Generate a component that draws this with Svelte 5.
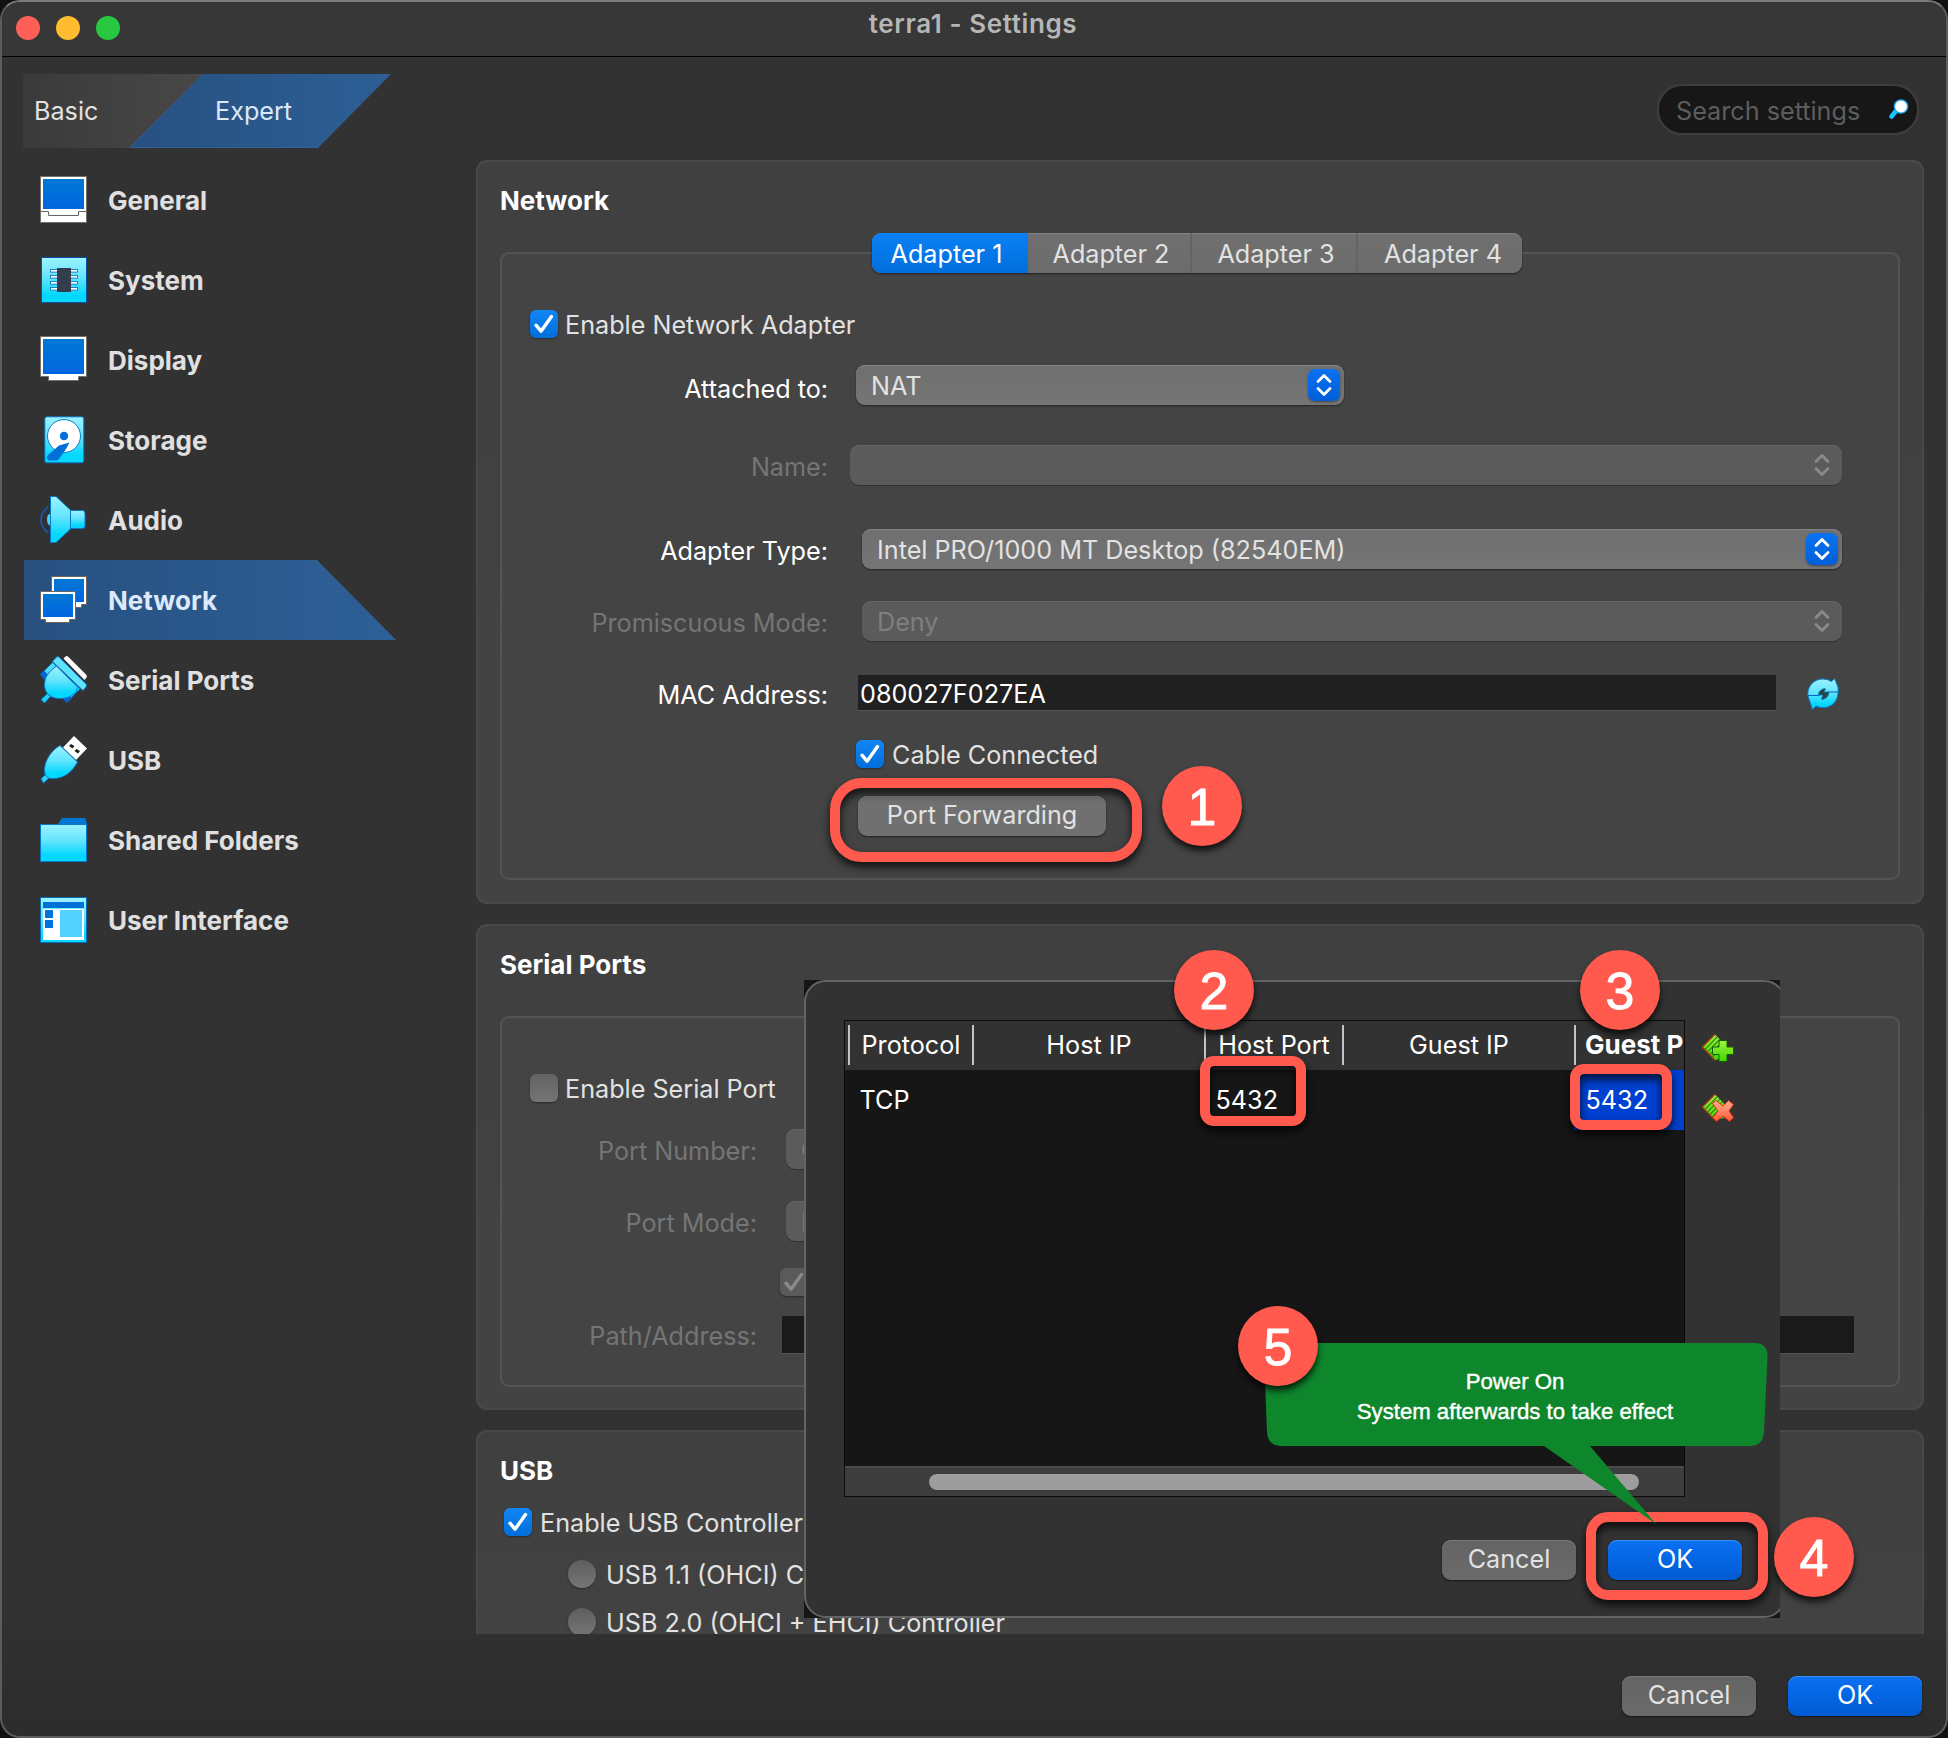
<script>
  const sections = ['General', 'System', 'Display', 'Storage', 'Audio', 'Network', 'Serial Ports', 'USB', 'Shared Folders', 'User Interface'];
  const adapters = ['Adapter 1', 'Adapter 2', 'Adapter 3', 'Adapter 4'];
  let current = $state('Network');
  let adapter = $state('Adapter 1');
</script>

{#snippet arrows()}
  <svg class="arrows" viewBox="0 0 16 24" width="16" height="24">
    <path d="M2 8.5 8 2.5l6 6M2 15.5l6 6 6-6" fill="none" stroke="currentColor" stroke-width="2.8" stroke-linecap="round" stroke-linejoin="round" />
  </svg>
{/snippet}

{#snippet box(kind)}
  <span class="box {kind}">
    {#if kind !== 'off'}
      <svg viewBox="0 0 28 28" width="28" height="28"><path d="M6 15.2l5 6L21.5 6.6" fill="none" stroke="currentColor" stroke-width="3.4" stroke-linecap="round" stroke-linejoin="round" /></svg>
    {/if}
  </span>
{/snippet}

{#snippet icon(name)}
  <svg class="icon" viewBox="0 0 48 48" width="48" height="48">
    {#if name === 'General'}
      <rect x=".5" y=".5" width="46" height="46" fill="#fff" stroke="#77706a" />
      <rect x="3" y="3" width="41" height="30" fill="url(#blue)" />
      <path d="M.5 35.5h8v4h30v-4h8" fill="none" stroke="#666" />
    {:else if name === 'System'}
      <rect x="1.5" y="1.5" width="45" height="45" fill="url(#cyan)" stroke="#0a4fa0" />
      {#each [13, 19, 25, 31] as y}
        <rect x="10.5" y={y + 0.5} width="27" height="2.6" fill="#fff" stroke="#1478b8" stroke-width=".9" />
      {/each}
      <rect x="17" y="12" width="14" height="24" fill="#343d4e" />
    {:else if name === 'Display'}
      <path d="M.5.5h46v40h-8v4h-30v-4h-8z" fill="#fff" stroke="#77706a" />
      <rect x="3" y="3" width="41" height="35" fill="url(#blue)" />
    {:else if name === 'Storage'}
      <rect x="4.8" y=".8" width="39" height="46" rx="2" fill="url(#cyan)" stroke="#0a6cc0" />
      <circle cx="24" cy="20" r="16.5" fill="#fff" stroke="#1478c8" />
      <circle cx="24" cy="20" r="4.2" fill="#0070d8" />
      <path d="M29.500 26.500 26 33l-7 10q-1.500 1.500-4 1.500H8.500Q5.500 42 8 39l11-9.500z" fill="#0070d8" />
    {:else if name === 'Audio'}
      <path d="M8.500 10.500C-1.500 18-1.500 30 8.500 36.500" fill="none" stroke="#0a62c4" stroke-width="1.500" />
      <path d="M11 17.500q-4 0-4 6t4 6z" fill="#43d8fa" />
      <path d="M10.500.500h5.500L30.500 14v19L16 46.500h-5.500z" fill="url(#cyan)" stroke="#0a78c8" />
      <path d="M30.500 14.500h12q2.500 0 2.500 3V30q0 2.500-3 2.500H30.500z" fill="url(#cyan)" stroke="#0a78c8" />
    {:else if name === 'Network'}
      <path d="M11.500.500h35v28h-5v3h-30z" fill="#fff" stroke="#6b6660" />
      <rect x="14" y="3" width="30" height="23" fill="url(#blue)" />
      <path d="M.500 15.500h35v28h-6v3h-24v-3h-5z" fill="#fff" stroke="#6b6660" />
      <rect x="3" y="18" width="30" height="23" fill="url(#blue)" />
    {:else if name === 'Serial Ports'}
      <path d="M1 43.500 8 37l3 3-6.500 7z" fill="#1fd0fa" stroke="#0a78c8" />
      <path d="M.500 18.500l12-12 6 6-11 12z" fill="#4fdcfb" stroke="#0a78c8" />
      <path d="M0 18.500 4 14.500l6 6-5 4z" fill="#0068d0" />
      <path d="M27 46l13-13-6.500-6.500-11 15z" fill="#19d4fb" stroke="#0a78c8" />
      <path d="M23 43 28 38l4 4-5 5z" fill="#0068d0" />
      <path d="M23.500 2.500 25.500 .500q1.500-1 3 .500L46 18.500q1.500 1.500 .500 3l-2 2.500z" fill="#fff" />
      <path d="M16.500 10 38 31.500C36 38 29 43 19 42.500 9 42 4.500 36 4.500 29 4.500 20 10 15 16.500 10z" fill="url(#cyan)" stroke="#0a78c8" />
      <path d="M16.500 1q1.500-1 3 .500L46 28q1 1.500 0 3l-3 3.500L12.500 5.500z" fill="#5fe2fc" stroke="#0a78c8" />
    {:else if name === 'USB'}
      <path d="M1 43 6 38l3.500 3.500-6 5.500z" fill="#2ad4fb" stroke="#0a78c8" />
      <path d="M34 0 47 12.500 36 24 23 11.500z" fill="#fff" />
      <path d="M29 10l2-2 3.500 2-2 2.500zM34.500 15l2-2 3.500 2-2 2.500z" fill="#222" />
      <path d="M20 9.500 37.500 26C32 36 24 43 12 42.500 6.500 42.500 4.500 39 4.500 34 4.500 24 12 14 20 9.500z" fill="url(#cyan)" stroke="#0a78c8" />
    {:else if name === 'Shared Folders'}
      <path d="M18 8l4-6h23.500L47 8v6H18z" fill="#0078d4" />
      <rect x=".500" y="8.500" width="46" height="37" fill="url(#cyan)" stroke="#0a78c8" />
    {:else}
      <rect x=".500" y="1.500" width="46" height="45" fill="url(#cyan)" stroke="#0a6cb8" />
      <rect x="3" y="6" width="41" height="6" fill="#0072d6" />
      <rect x="3" y="13" width="41" height="31" fill="#fff" />
      <rect x="5" y="14" width="8" height="8" fill="#0072dc" />
      <rect x="5" y="24" width="8" height="8" fill="#0072dc" />
      <rect x="20" y="14" width="22" height="27" fill="#54d2ff" />
    {/if}
  </svg>
{/snippet}

<svg class="defs" width="0" height="0">
  <defs>
    <linearGradient id="cyan" x1="0" y1="0" x2="0" y2="1">
      <stop offset="0" stop-color="#9df3ff" />
      <stop offset=".45" stop-color="#62e4fd" />
      <stop offset=".85" stop-color="#00d7ff" />
      <stop offset="1" stop-color="#0cd9ff" />
    </linearGradient>
    <linearGradient id="blue" x1="0" y1="0" x2="0" y2="1">
      <stop offset="0" stop-color="#0078d4" />
      <stop offset="1" stop-color="#0066e0" />
    </linearGradient>
    <linearGradient id="green" x1="0" y1="0" x2="0" y2="1">
      <stop offset="0" stop-color="#a4f33c" />
      <stop offset="1" stop-color="#3bd800" />
    </linearGradient>
    <linearGradient id="coral" x1="0" y1="0" x2="0" y2="1">
      <stop offset="0" stop-color="#ffb08a" />
      <stop offset="1" stop-color="#ff5a3c" />
    </linearGradient>
  </defs>
</svg>

<div class="screen">
  <div class="window">
    <header class="titlebar">
      <i class="light close"></i><i class="light min"></i><i class="light max"></i>
      <h1>terra1 - Settings</h1>
    </header>

    <div class="toolbar">
      <div class="modes">
        <svg class="modeshape" viewBox="0 0 368 74" width="368" height="74">
          <defs>
            <linearGradient id="basic"><stop offset="0" stop-color="#3a3a3a" /><stop offset="1" stop-color="#484848" /></linearGradient>
            <linearGradient id="expert"><stop offset="0" stop-color="#27507f" /><stop offset="1" stop-color="#2c5f96" /></linearGradient>
          </defs>
          <path d="M0 0h180l-74 74H0z" fill="url(#basic)" />
          <path d="M180 0h188l-73 74H106z" fill="url(#expert)" />
          <path d="M180.500 .500 107 73.500h188" fill="none" stroke="#306299" />
        </svg>
        <span class="basic">Basic</span>
        <span class="expert">Expert</span>
      </div>
      <div class="search">
        <span>Search settings</span>
        <svg viewBox="0 0 20 20" width="20" height="20">
          <path d="M2.500 17.500 7 12" stroke="#12c8fa" stroke-width="4.500" stroke-linecap="round" />
          <circle cx="12" cy="7.500" r="6.600" fill="#fff" stroke="#19a8f0" stroke-width="1.400" />
        </svg>
      </div>
    </div>

    <div class="main">
      <nav>
        {#each sections as s}
          <button class="nav" class:active={s === current} onclick={() => (current = s)}>
            {@render icon(s)}<span>{s}</span>
          </button>
        {/each}
      </nav>

      <div class="content">
        <section class="panel network">
          <h2>Network</h2>
          <div class="group">
            <div class="tabs">
              {#each adapters as a}
                <button class="tab" class:on={a === adapter} onclick={() => (adapter = a)}>{a}</button>
              {/each}
            </div>
            <div class="form form-net">
              <div class="row check-row">{@render box('on')}<span>Enable Network Adapter</span></div>
              <div class="row">
                <span class="label low">Attached to:</span>
                <div class="select nat"><span>NAT</span><i class="knob">{@render arrows()}</i></div>
              </div>
              <div class="row dim">
                <span class="label">Name:</span>
                <div class="select name off"><span></span><i class="knob">{@render arrows()}</i></div>
              </div>
              <div class="row">
                <span class="label">Adapter Type:</span>
                <div class="select type"><span>Intel PRO/1000 MT Desktop (82540EM)</span><i class="knob">{@render arrows()}</i></div>
              </div>
              <div class="row dim">
                <span class="label">Promiscuous Mode:</span>
                <div class="select type off"><span>Deny</span><i class="knob">{@render arrows()}</i></div>
              </div>
              <div class="row">
                <span class="label">MAC Address:</span>
                <div class="input mac">080027F027EA</div>
                <svg class="refresh" viewBox="0 0 32 32" width="32" height="32">
                  <path d="M.800 17.500C0 8 7 1 16 1q5 0 8.500 2.500L27.500.500 31 9q1.500 12-6 18-8 5-16 1L5.500 31.500z" fill="url(#cyan)" stroke="#0a78c8" />
                  <path d="M.800 17.500H12.500M31.500 14H20" stroke="#0a64b8" stroke-width="1.200" />
                  <path d="M11.500 17q0-5 6-6.500l1 .500-1.500 3h5q-.500 6-6.500 7.500l-1-.500 1.500-4z" fill="#28434f" stroke="#0a78a8" stroke-width=".8" />
                </svg>
              </div>
              <div class="row cable">{@render box('on')}<span>Cable Connected</span></div>
              <div class="row"><button class="btn forward">Port Forwarding</button></div>
            </div>
          </div>
        </section>

        <section class="panel serial">
          <h2>Serial Ports</h2>
          <div class="group">
            <div class="form form-serial">
              <div class="row check-row">{@render box('off')}<span>Enable Serial Port</span></div>
              <div class="row dim">
                <span class="label">Port Number:</span>
                <div class="select port off"><span>COM1</span></div>
              </div>
              <div class="row dim">
                <span class="label">Port Mode:</span>
                <div class="select port off"><span>Disconnected</span></div>
              </div>
              <div class="row pipe">{@render box('dimmed')}</div>
              <div class="row dim">
                <span class="label path-label">Path/Address:</span>
                <div class="input path"></div>
              </div>
            </div>
          </div>
        </section>

        <section class="panel usb">
          <h2>USB</h2>
          <div class="row usb-on">{@render box('on')}<span>Enable USB Controller</span></div>
          <div class="row radio-row"><i class="radio"></i><span>USB 1.1 (OHCI) Controller</span></div>
          <div class="row radio-row"><i class="radio"></i><span>USB 2.0 (OHCI + EHCI) Controller</span></div>
        </section>
      </div>
    </div>

    <footer>
      <button class="btn">Cancel</button>
      <button class="btn primary">OK</button>
    </footer>
  </div>

  <div class="dialog">
    <div class="sheet">
      <div class="rules">
        <div class="table">
          <div class="thead">
            <span>Protocol</span><span>Host IP</span><span>Host Port</span><span>Guest IP</span><span class="sorted">Guest P</span>
          </div>
          <div class="tbody">
            <span>TCP</span><span></span><span>5432</span><span></span><span class="picked">5432</span>
          </div>
          <div class="scroll"><i></i></div>
        </div>
        <div class="tools">
          <svg viewBox="0 0 32 32" width="32" height="32">
            <path d="M.700 17 13 4.500l9 9V28l-9 2z" fill="url(#green)" />
            <path d="M3 19.500 15.500 6.500M5.500 22 18 9M8 24.500 20 12M10.500 27 20 17" stroke="#2c8a10" stroke-width="1.100" />
            <path d="M13 30 .700 17 13 4.500" fill="none" stroke="#b04a10" stroke-width="1.200" />
            <path d="M17 10.500h8V17h6.500v7.500H25v7h-8v-7h-6.500V17H17z" fill="url(#green)" stroke="#145c0a" />
          </svg>
          <svg viewBox="0 0 32 32" width="32" height="32">
            <path d="M.700 17 13 4.500l9 9V28l-9 2z" fill="url(#green)" />
            <path d="M3 19.500 15.500 6.500M5.500 22 18 9M8 24.500 20 12M10.500 27 20 17" stroke="#2c8a10" stroke-width="1.100" />
            <path d="M13 30 .700 17 13 4.500" fill="none" stroke="#b04a10" stroke-width="1.200" />
            <path d="M10.500 13.500 14 10.500l7 5.500 5.500-5.500 5 4-4.500 6.500 4.500 6.500-4 4-6.500-5.500-6.500 5.500-3.500-4 5-6.500z" fill="url(#coral)" stroke="#e0250c" />
          </svg>
        </div>
      </div>
      <div class="actions">
        <button class="btn">Cancel</button>
        <button class="btn primary">OK</button>
      </div>
    </div>
  </div>

  <!-- Walkthrough markers laid over the window -->
  <div class="ring r1"></div>
  <div class="ring r2"></div>
  <div class="ring r3"></div>
  <div class="ring r4"></div>
  <div class="callout">
    <svg viewBox="0 0 508 184" width="508" height="184">
      <path d="M14 0H490Q504 0 503.500 14L500 89Q499 103 486 103H326L392 181 280 103H17Q4 103 3 89L0 14Q0 0 14 0Z" fill="#0e862c" />
    </svg>
    <p>Power On<br />System afterwards to take effect</p>
  </div>
  <b class="step s1">1</b>
  <b class="step s2">2</b>
  <b class="step s3">3</b>
  <b class="step s4">4</b>
  <b class="step s5">5</b>
</div>

<style>
  :global(body) { margin: 0; background: #111; }
  * { box-sizing: border-box; }
  button { font: inherit; letter-spacing: inherit; border: 0; padding: 0; margin: 0; background: none; color: inherit; }
  .defs { position: absolute; }
  .screen {
    position: relative; width: 1948px; height: 1738px; overflow: hidden; background: #111;
    font: 25.2px/40px Inter, "Liberation Sans", sans-serif; color: #e2e2e2; white-space: nowrap;
  }
  .window {
    height: 1738px; display: flex; flex-direction: column; border: 2px solid #6a6a6a; border-color: #7c7c7c #5c5c5c #5c5c5c;
    border-radius: 20px; overflow: hidden; background: linear-gradient(#323232 92%, #2c2c2c);
  }
  .titlebar { height: 55px; flex: none; display: flex; align-items: center; gap: 16px; padding-left: 14px; background: #373737; border-bottom: 1px solid #000; }
  .light { width: 24px; height: 24px; border-radius: 50%; margin-top: -2px; }
  .close { background: #ff5f57; }
  .min { background: #febc2e; }
  .max { background: #28c840; }
  h1 { margin: 0 136px 10px 0; flex: 1; text-align: center; font-size: 26px; letter-spacing: .6px; font-weight: 600; color: #b6b6b6; }

  .toolbar { height: 103px; flex: none; display: flex; justify-content: space-between; padding: 17px 27px 0 21px; }
  .modes { display: grid; width: 368px; height: 74px; align-items: center; }
  .modes > * { grid-area: 1 / 1; }
  .basic { padding-left: 11px; }
  .expert { padding-left: 192px; color: #dce8f6; }
  .search {
    margin-top: 10px; width: 262px; height: 51px; border-radius: 25px; border: 2px solid #3e3e3e; background: #171717;
    color: #5d5d5d; display: flex; align-items: center; justify-content: space-between; padding: 2px 8px 0 17px;
  }
  .search svg { margin-top: -3px; }

  .main { height: 1474px; flex: none; display: flex; overflow: hidden; }
  nav { width: 474px; padding-left: 22px; flex: none; }
  .nav { width: 372px; height: 80px; display: flex; align-items: center; gap: 20px; padding-left: 16px; font-weight: 700; font-size: 26px; color: #e0e0e0; }
  .nav span { padding-top: 2px; }
  .active { background: linear-gradient(90deg, #27507f, #2d6098); clip-path: polygon(0 0, 293px 0, 100% 100%, 0 100%); color: #dde9f8; }

  .content { width: 1448px; display: flex; flex-direction: column; gap: 20px; }
  .panel { flex: none; border: 2px solid #494949; border-radius: 11px; background: linear-gradient(#404040, #434343); padding: 19px 22px 0; }
  h2 { margin: 0; font-size: 26px; line-height: 40px; font-weight: 700; color: #fff; }
  .network { height: 744px; }
  .serial { height: 486px; }
  .usb { height: 300px; }
  .group { margin-top: 31px; border: 2px solid #545454; border-radius: 9px; background: #444; }
  .network .group { height: 628px; }
  .serial .group { height: 371px; }
  .tabs {
    width: 650px; height: 40px; margin: -21px auto 0; transform: translateX(-3px); display: grid; grid-template-columns: 156px 164px 166px 164px;
    border-radius: 9px; overflow: hidden; background: linear-gradient(#707070, #6c6c6c); box-shadow: 0 1px 2px #0008, inset 0 1px #858585;
  }
  .tab { border-right: 2px solid #646464; padding: 1px 0 0 4px; }
  .tab:last-child { border: 0; padding-left: 6px; }
  .tab.on { border: 0; padding: 1px 7px 0 0; background: linear-gradient(#0a80f5, #006fdc); color: #fff; }

  .form { display: grid; }
  .form-net { margin-top: 31px; grid-template-rows: 61px 80px 84px 72px 72px 61px 62px 40px; }
  .form-serial { margin-top: 50px; grid-template-rows: 61px 72px 61px 53px 40px; }
  .row { height: 40px; display: flex; align-items: center; }
  .row > span:not(.box, .label) { padding-top: 2px; }
  .check-row { padding-left: 28px; gap: 7px; }
  .label { flex: none; width: 325px; text-align: right; color: #fff; padding-top: 3px; margin: 0 -1px 0 1px; }
  .low { padding-top: 7px; }
  .path-label { padding-top: 1px; }
  .serial .label { width: 254px; }
  .dim { color: #7c7c7c; }
  .dim .label { color: #757575; }
  .box { width: 28px; height: 28px; border-radius: 6px; color: #fff; display: flex; box-shadow: 0 1px 2px #0006; }
  .on.box { background: linear-gradient(#1186f5, #006edb); }
  .off.box { background: linear-gradient(#636363, #757575); }
  .dimmed.box { background: #5a5a5a; color: #8a8a8a; }
  .select {
    height: 40px; border-radius: 9px; display: flex; align-items: center; justify-content: space-between; padding: 0 4px 0 15px;
    background: linear-gradient(#6f6f6f, #757575); box-shadow: 0 1px 2px #0007, inset 0 1px #858585;
  }
  .select span { padding-top: 2px; }
  .select.off { background: #5b5b5b; box-shadow: 0 1px 1px #0004, inset 0 1px #666; color: #7f7f7f; }
  .nat { width: 488px; margin-left: 29px; }
  .name { width: 992px; margin-left: 23px; }
  .type { width: 980px; margin-left: 35px; }
  .port { width: 600px; margin-left: 30px; }
  .knob { width: 32px; height: 32px; border-radius: 7px; display: grid; place-items: center; color: #fff; background: linear-gradient(#0b72f0, #005fd8); box-shadow: 0 1px 2px #0006; }
  .off .knob { background: none; box-shadow: none; color: #8a8a8a; }
  .input { height: 36px; line-height: 38px; background: #202020; color: #fff; border-bottom: 1px solid #555; padding-left: 2px; }
  .mac { width: 918px; margin-left: 31px; }
  .path { width: 1072px; margin-left: 26px; background: #1a1a1a; height: 38px; }
  .refresh { margin: 2px 0 0 31px; }
  .cable { padding-left: 354px; gap: 8px; }
  .pipe { padding-left: 278px; }
  .forward { margin-left: 356px; width: 248px; }
  .usb-on { margin: 11px 0 0 4px; gap: 8px; }
  .radio-row { margin-left: 68px; gap: 10px; height: 48px; }
  .usb-on + .radio-row { margin-top: 8px; }
  .radio { width: 28px; height: 28px; border-radius: 50%; background: linear-gradient(#5e5e5e, #757575); box-shadow: 0 1px 2px #0006; }

  .btn { height: 40px; width: 134px; border-radius: 9px; text-align: center; background: linear-gradient(#646464, #6a6a6a); box-shadow: 0 1px 2px #0008, inset 0 1px #7c7c7c; line-height: 38px; padding-bottom: 2px; }
  .forward.btn { width: 248px; background: #707070; }
  .primary.btn { background: linear-gradient(#0a70f2, #005bd2); color: #fff; box-shadow: 0 1px 2px #0008, inset 0 1px #3d8ef5; }
  footer { flex: 1; display: flex; justify-content: flex-end; gap: 32px; padding: 42px 24px 0 0; }

  .dialog { position: absolute; left: 804px; top: 980px; width: 976px; height: 638px; background: #161616; overflow: hidden; }
  .sheet { width: 982px; height: 638px; border: 2px solid #646464; border-radius: 22px; background: #323232; padding: 38px 0 0 38px; }
  .rules { display: flex; gap: 17px; }
  .table { width: 841px; height: 477px; border: 1px solid #0a0a0a; background: #161616; display: flex; flex-direction: column; overflow: hidden; }
  .thead, .tbody { display: grid; flex: none; grid-template-columns: 124px 232px 138px 232px 200px; padding-left: 3px; color: #fff; }
  .thead { height: 49px; background: #323232; padding-top: 4px; }
  .thead span { height: 40px; border-left: 2px solid #c4c4c4; text-align: center; }
  .thead .sorted { text-align: left; padding-left: 9px; font-weight: 700; font-size: 26px; }
  .tbody { height: 60px; line-height: 60px; }
  .tbody span { padding-left: 10.5px; border-left: 1px solid #131313; }
  .tbody .picked { background: #0040d0; border-color: #0040d0; }
  .scroll { margin-top: auto; height: 30px; background: #3d3d3d; border-top: 2px solid #4a4a4a; padding: 6px 0 0 84px; }
  .scroll i { display: block; width: 710px; height: 16px; border-radius: 8px; background: #9d9d9d; }
  .tools { display: flex; flex-direction: column; gap: 28px; padding-top: 10px; }
  .actions { display: flex; gap: 32px; padding: 43px 0 0 598px; }

  .ring { position: absolute; border: 10px solid #ff5a4d; filter: drop-shadow(0 5px 4px #000c); }
  .r1 { left: 830px; top: 778px; width: 312px; height: 84px; border-radius: 32px; }
  .r2 { left: 1200px; top: 1056px; width: 106px; height: 70px; border-radius: 14px; }
  .r3 { left: 1570px; top: 1064px; width: 102px; height: 66px; border-radius: 14px; }
  .r4 { left: 1586px; top: 1512px; width: 182px; height: 88px; border-radius: 22px; }
  .step {
    position: absolute; width: 80px; height: 80px; border-radius: 50%; background: #ff5a4d; color: #fff; text-align: center;
    font: 400 52px/82px "Liberation Sans", Arial, sans-serif; -webkit-text-stroke: .8px #fff; box-shadow: 0 5px 6px #000b;
  }
  .s1 { left: 1162px; top: 766px; }
  .s2 { left: 1174px; top: 950px; }
  .s3 { left: 1580px; top: 950px; }
  .s4 { left: 1774px; top: 1517px; }
  .s5 { left: 1238px; top: 1306px; }
  .callout { position: absolute; left: 1264px; top: 1343px; width: 508px; }
  .callout svg { display: block; }
  .callout p { position: absolute; margin: 0; left: 0; top: 24px; width: 502px; text-align: center; color: #fff; font: 22.200px/30px "Liberation Sans", Arial, sans-serif; -webkit-text-stroke: .4px #fff; }
</style>
